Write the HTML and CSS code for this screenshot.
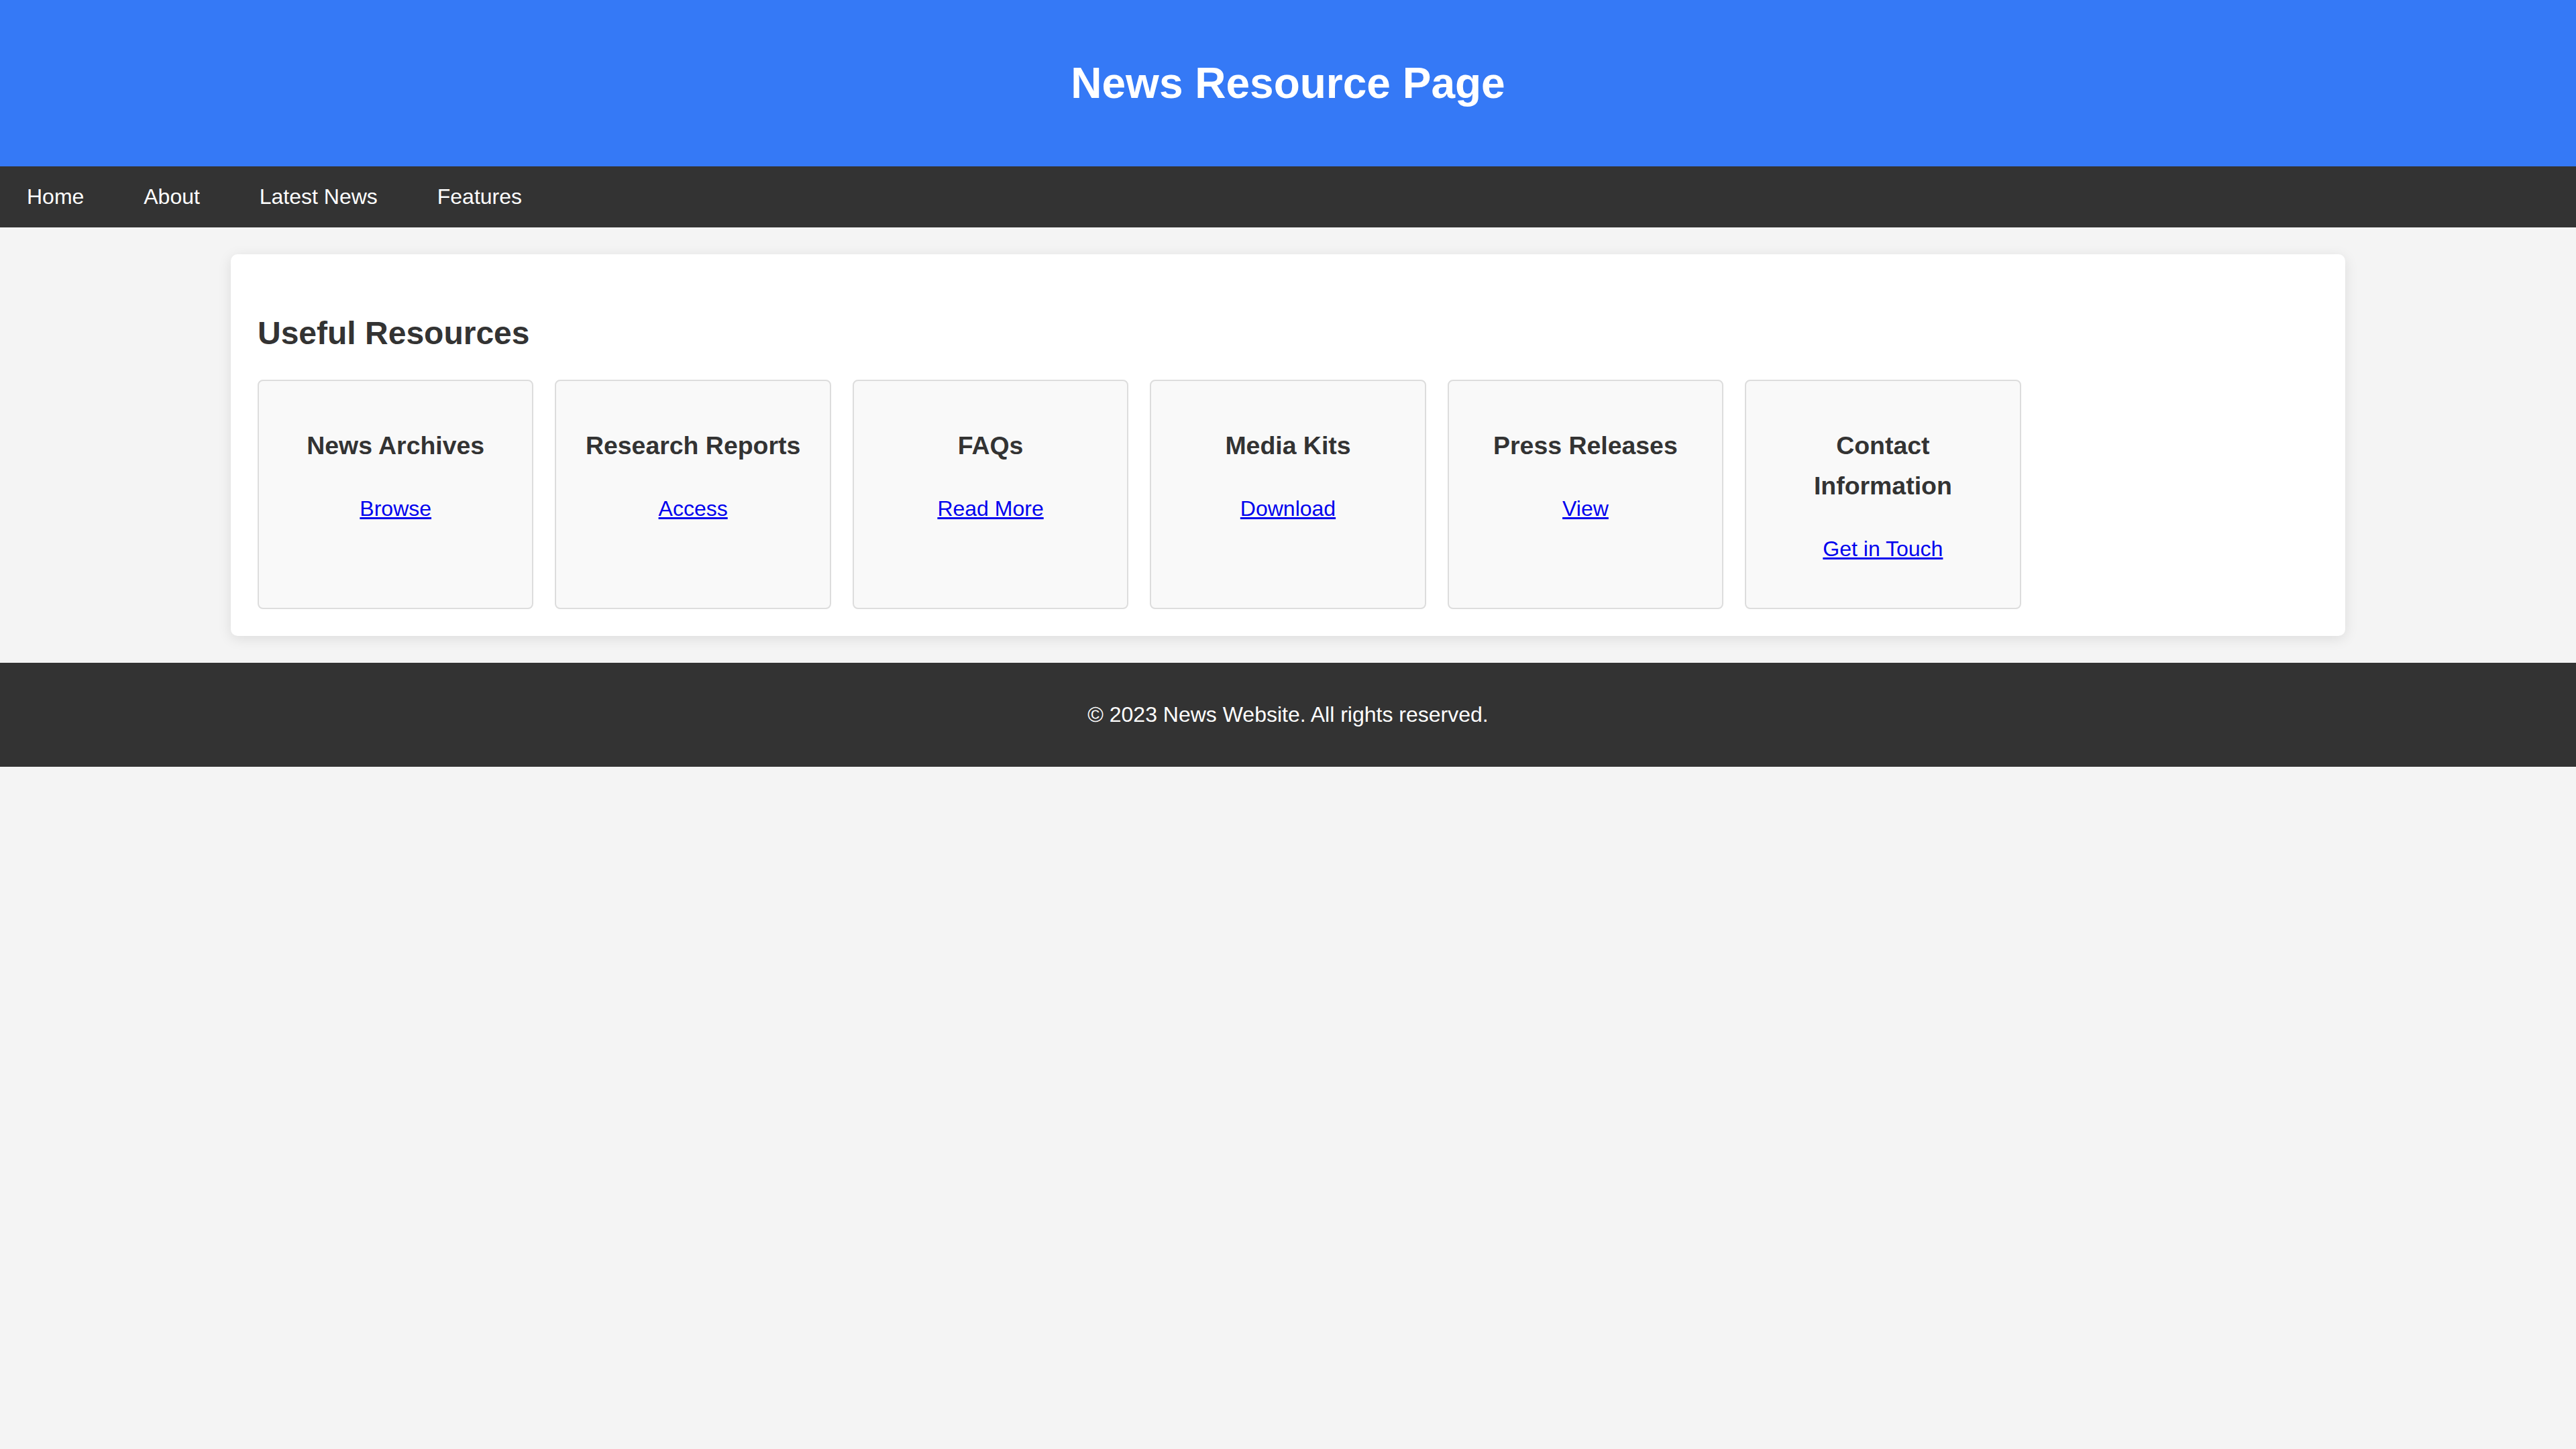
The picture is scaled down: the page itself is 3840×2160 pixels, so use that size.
FILE: index.html
```html
<!DOCTYPE html>
<html lang="en">
<head>
<meta charset="UTF-8">
<title>News Resource Page</title>
<link rel="stylesheet" href="styles.css">
</head>
<body>
<header class="site-header">
  <h1 class="site-title">News Resource Page</h1>
</header>
<nav class="main-nav">
  <a href="#">Home</a>
  <a href="#">About</a>
  <a href="#">Latest News</a>
  <a href="#">Features</a>
</nav>
<main class="container">
  <section class="resources">
    <h2 class="section-title">Useful Resources</h2>
    <div class="resource-grid">
      <div class="resource-card">
        <h3>News Archives</h3>
        <p><a href="#">Browse</a></p>
      </div>
      <div class="resource-card">
        <h3>Research Reports</h3>
        <p><a href="#">Access</a></p>
      </div>
      <div class="resource-card">
        <h3>FAQs</h3>
        <p><a href="#">Read More</a></p>
      </div>
      <div class="resource-card">
        <h3>Media Kits</h3>
        <p><a href="#">Download</a></p>
      </div>
      <div class="resource-card">
        <h3>Press Releases</h3>
        <p><a href="#">View</a></p>
      </div>
      <div class="resource-card">
        <h3>Contact Information</h3>
        <p><a href="#">Get in Touch</a></p>
      </div>
    </div>
  </section>
</main>
<footer class="site-footer">
  <p>&copy; 2023 News Website. All rights reserved.</p>
</footer>
</body>
</html>
```

FILE: styles.css
```css
html, body {
  margin: 0;
  padding: 0;
}

body {
  font-family: "Liberation Sans", Arial, Helvetica, sans-serif;
  font-size: 32px;
  line-height: 1.6;
  background: #f4f4f4;
  color: #333;
}

.site-header {
  background: #3579f6;
  color: #fff;
  text-align: center;
  padding: 30px 0;
}

.site-title {
  font-size: 64px;
  font-weight: bold;
  margin: 42.88px 0;
}

.main-nav {
  background: #333;
  display: flex;
  gap: 8.9px;
}

.main-nav a {
  color: #fff;
  text-decoration: none;
  padding: 20px 40px;
  font-size: 32px;
  line-height: 51.2px;
}

.container {
  width: 80%;
  margin: 40px auto;
  padding: 40px;
  background: #fff;
  border-radius: 10px;
  box-shadow: 0 4px 20px rgba(0, 0, 0, 0.1);
}

.section-title {
  font-size: 48px;
  margin: 39.84px 0 30px;
}

.resource-grid {
  display: grid;
  grid-template-columns: repeat(auto-fill, minmax(400px, 1fr));
  gap: 32px;
}

.resource-card {
  background: #f9f9f9;
  border: 2px solid #ddd;
  border-radius: 8px;
  padding: 30px;
  text-align: center;
}

.resource-card h3 {
  font-size: 37.44px;
  margin: 37.44px 0;
}

.resource-card p {
  margin: 32px 0;
}

.resource-card a {
  color: #0000ee;
  text-decoration: underline;
}

.site-footer {
  background: #333;
  color: #fff;
  text-align: center;
  padding: 20px 0;
}

.site-footer p {
  margin: 32px 0;
}
```
